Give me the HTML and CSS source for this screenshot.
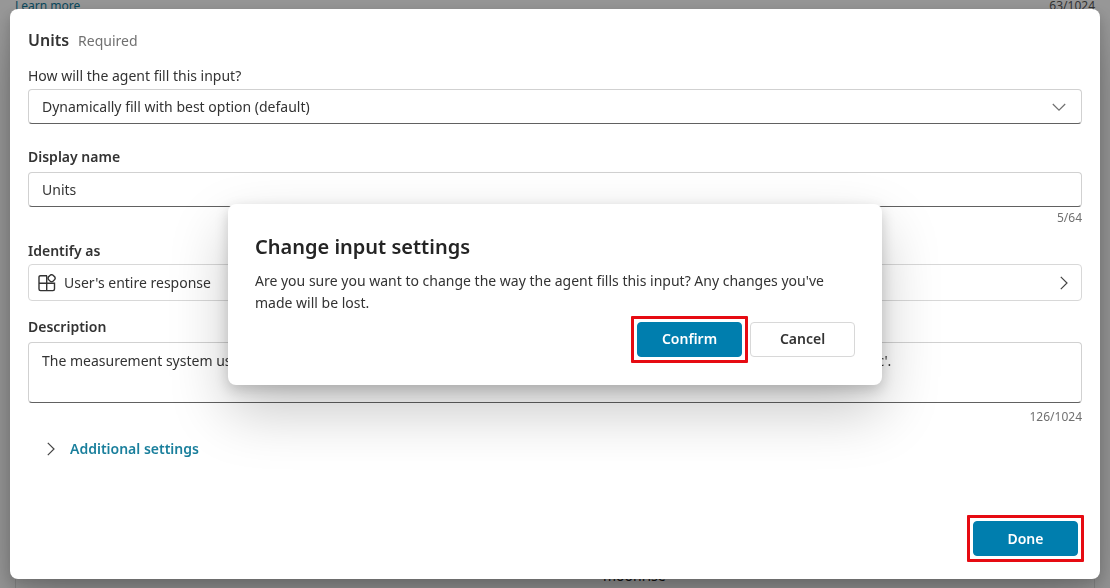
FILE: index.html
```html
<!DOCTYPE html>
<html lang="en">
<head>
<meta charset="utf-8">
<title>Units</title>
<link rel="stylesheet" href="styles.css">
</head>
<body>
<main class="page">
  <div class="page-top"><a class="page-link" href="#">Learn more</a><span class="page-count">63/1024</span></div>
  <div class="page-bottom"><span>moonrise</span></div>
</main>
<div class="overlay">
  <section class="panel" role="dialog" aria-labelledby="panel-title">
    <header class="panel-head"><h1 class="panel-title" id="panel-title">Units</h1><span class="required">Required</span></header>
    <form class="form">
      <div class="field">
        <label class="label label-plain" for="fill">How will the agent fill this input?</label>
        <div class="select-wrap">
          <select class="control" id="fill"><option>Dynamically fill with best option (default)</option></select>
          <svg class="select-icon" width="14" height="14" viewBox="0 0 14 14" fill="none" stroke="#707070" stroke-width="1.2"><path d="M.8 4 7 10.2 13.2 4"/></svg>
        </div>
      </div>
      <div class="field field-name">
        <label class="label label-spaced" for="name">Display name</label>
        <input class="control" id="name" type="text" value="Units">
        <span class="count">5/64</span>
      </div>
      <div class="field field-identify">
        <span class="label" id="identify-label">Identify as</span>
        <button class="picker" type="button" aria-describedby="identify-label">
          <svg width="18" height="18" viewBox="0 0 18 18" fill="none" stroke="#333" stroke-width="1.4"><path d="M9 1.7H2.5C1.5 1.7 1 2.2 1 3.1v12c0 1 .5 1.5 1.5 1.5h12.5c1 0 1.5-.5 1.5-1.5V9.2H1M8.7 1.7v14.9"/><path d="m12.4 1 1.2-.4 1.2.4 2 2 .4 1.2-.4 1.2-2 2-1.2.4-1.2-.4-2-2L10 4.200l.4-1.200z"/></svg>
          <span class="picker-text">User's entire response</span>
          <svg width="8" height="14" viewBox="0 0 8 14" fill="none" stroke="#444" stroke-width="1.2"><path d="m.8.8 6.2 6.2-6.2 6.2"/></svg>
        </button>
      </div>
      <div class="field field-description">
        <label class="label label-spaced" for="description">Description</label>
        <textarea class="control control-area" id="description">The measurement system used for the Temperature, Pressure, Wind speed and Distance values. Options are 'Imperial' or 'Metric'.</textarea>
        <span class="count count-area">126/1024</span>
      </div>
      <button class="more" type="button">
        <svg width="8" height="14" viewBox="0 0 8 14" fill="none" stroke="#444" stroke-width="1.2"><path d="m.8.8 6.2 6.2-6.2 6.2"/></svg>
        Additional settings
      </button>
    </form>
    <footer class="panel-foot"><button class="button button-primary" type="button">Done</button></footer>
  </section>
</div>
<div class="overlay overlay-center">
  <section class="dialog" role="alertdialog" aria-labelledby="dialog-title" aria-describedby="dialog-text">
    <h2 class="dialog-title" id="dialog-title">Change input settings</h2>
    <p class="dialog-text" id="dialog-text">Are you sure you want to change the way the agent fills this input? Any changes you've made will be lost.</p>
    <div class="dialog-actions">
      <button class="button button-primary" type="button">Confirm</button>
      <button class="button" type="button">Cancel</button>
    </div>
  </section>
</div>
</body>
</html>
```
FILE: styles.css
```css
* { box-sizing: border-box; }
body {
  margin: 0;
  background: #999;
  color: #333;
  font-family: "Noto Sans", "Open Sans", sans-serif;
  font-size: 14px;
  line-height: 20px;
}
button, input, select, textarea { font: inherit; color: inherit; }
h1, h2, p { margin: 0; }
svg { display: block; flex: none; }

.page {
  display: flex;
  flex-direction: column;
  justify-content: space-between;
  height: 100vh;
  overflow: hidden;
}
.page-top {
  display: flex;
  justify-content: space-between;
  margin: -4px 15px 0;
  font-size: 12px;
}
.page-link { color: #0a4a5e; }
.page-bottom {
  margin: 0 15px;
  padding: 0 0 2px 587px;
  border: solid #888;
  border-width: 0 1px;
  color: #111;
}

.overlay {
  position: fixed;
  inset: 0;
  display: flex;
  padding: 9px 10px;
}
.overlay-center {
  align-items: center;
  justify-content: center;
  padding: 0 24px;
}
.panel {
  flex: 1;
  display: flex;
  flex-direction: column;
  padding: 21px 18px 23px;
  border-radius: 8px;
  background: #fff;
  box-shadow: 0 5px 14px rgba(0, 0, 0, .18), 0 26px 58px rgba(0, 0, 0, .22);
}
.panel-head {
  display: flex;
  align-items: baseline;
  gap: 9px;
  margin-bottom: 15px;
}
.panel-title { font-size: 16px; line-height: 20px; font-weight: 600; }
.required { color: #707070; }

.form, .field { display: flex; flex-direction: column; }
.field-name { margin-top: 23px; }
.field-identify { margin-top: 15px; }
.field-description { margin-top: 16px; }
.label { margin-bottom: 3px; font-weight: 600; }
.label-plain { font-weight: 400; }
.label-spaced { margin-bottom: 5px; }
.control {
  display: block;
  width: 100%;
  height: 35px;
  padding: 0 13px;
  border: 1px solid #d1d1d1;
  border-bottom-color: #616161;
  border-radius: 4px;
  background: #fff;
  appearance: none;
}
.control-area { height: 61px; padding: 8px 13px; resize: none; }
.select-wrap { display: grid; align-items: center; }
.select-wrap > * { grid-area: 1 / 1; }
.select-icon { justify-self: end; margin-right: 16px; pointer-events: none; }
.count {
  align-self: flex-end;
  margin-top: 3px;
  color: #707070;
  font-size: 12px;
  line-height: 16px;
}
.count-area { margin-top: 6px; }
.picker {
  display: flex;
  align-items: center;
  gap: 8px;
  height: 37px;
  padding: 0 13px 0 9px;
  border: 1px solid #d8d8d8;
  border-radius: 4px;
  background: #fff;
  text-align: left;
}
.picker-text { flex: 1; }
.more {
  display: flex;
  align-items: center;
  align-self: flex-start;
  gap: 15px;
  margin-top: 14px;
  padding: 0 19px;
  border: 0;
  background: none;
  color: #1a7f9c;
  font-weight: 600;
}
.panel-foot {
  display: flex;
  justify-content: flex-end;
  margin-top: auto;
  padding-right: 4px;
}

.button {
  position: relative;
  width: 105px;
  height: 35px;
  padding: 0;
  border: 1px solid #d8d8d8;
  border-radius: 4px;
  background: #fff;
  font-weight: 600;
}
.button-primary { border-color: #007eae; background: #007eae; color: #fff; }
.button-primary::after {
  content: "";
  position: absolute;
  inset: -7px;
  border: 3px solid #e60b12;
  border-radius: 1px;
}
.dialog {
  width: 100%;
  max-width: 654px;
  padding: 30px 27px 28px;
  border-radius: 8px;
  background: #fff;
  box-shadow: 0 5px 14px rgba(0, 0, 0, .18), 0 26px 58px rgba(0, 0, 0, .22);
}
.dialog-title { font-size: 20px; line-height: 26px; font-weight: 600; color: #242424; }
.dialog-text { margin-top: 10px; line-height: 22px; }
.dialog-actions {
  display: flex;
  justify-content: flex-end;
  gap: 8px;
  margin-top: 8px;
}
```
